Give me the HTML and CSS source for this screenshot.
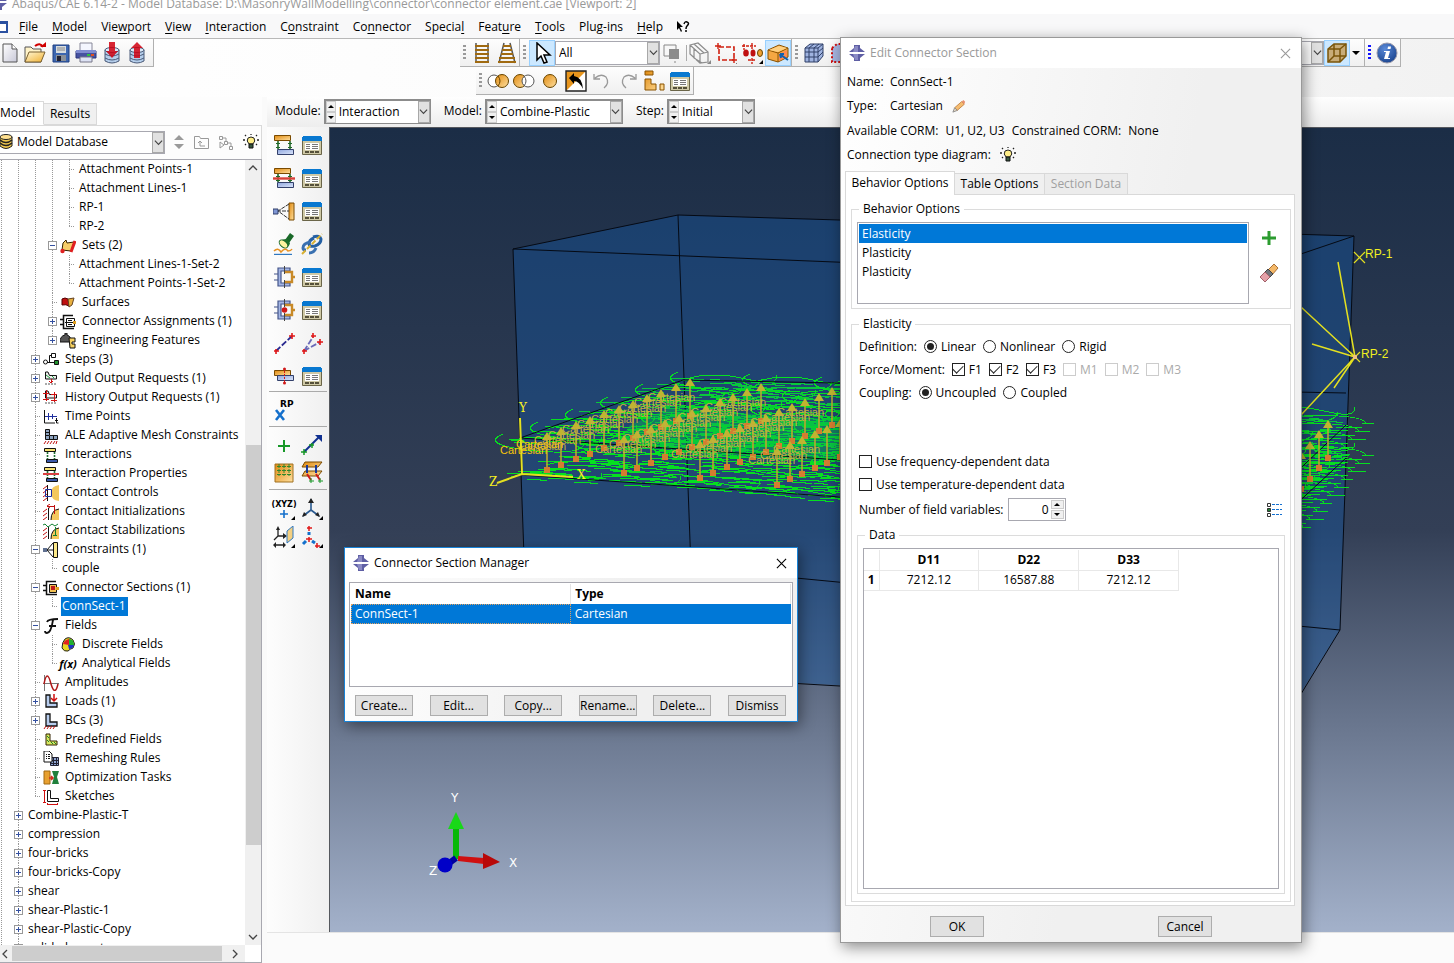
FILE: index.html
```html
<!DOCTYPE html>
<html lang="en">
<head>
<meta charset="utf-8">
<title>Abaqus/CAE 6.14-2</title>
<link rel="stylesheet" href="styles.css">
</head>
<body>
<svg class="defs" aria-hidden="true">
  <defs>
    <linearGradient id="gold" x1="0" y1="0" x2="1" y2="1"><stop offset="0" stop-color="#e08a10"/><stop offset="1" stop-color="#ffe0a0"/></linearGradient>
    <linearGradient id="steel" x1="0" y1="0" x2="1" y2="1"><stop offset="0" stop-color="#8fa6de"/><stop offset="1" stop-color="#dce6fa"/></linearGradient>
    <linearGradient id="folder" x1="0" y1="0" x2="1" y2="1"><stop offset="0" stop-color="#fff8d8"/><stop offset="1" stop-color="#f0b030"/></linearGradient>
    <linearGradient id="paper" x1="0" y1="0" x2="1" y2="1"><stop offset="0" stop-color="#fff"/><stop offset="1" stop-color="#c8c8d8"/></linearGradient>
    <radialGradient id="ball" cx=".4" cy=".3" r=".8"><stop offset="0" stop-color="#5a8ad8"/><stop offset="1" stop-color="#153e88"/></radialGradient>
  </defs>
  <symbol id="logo" viewBox="0 0 16 16"><path d="M5 0h6v3l5 4H0l5-4zM0 9h16l-5 4v3H5v-3z" fill="#5e5ea4"/><path d="M6 1h3v6H4zM4 9h5v6H6z" fill="#8a8ac4"/></symbol>
  <symbol id="new" viewBox="0 0 22 22"><path d="M4 2h9l5 5v13H4z" fill="url(#paper)" stroke="#555" /><path d="M13 2v5h5" fill="#fff" stroke="#555"/></symbol>
  <symbol id="open" viewBox="0 0 22 22"><path d="M1 5h6l2 2h8v13H1z" fill="#fff3c8" stroke="#555"/><path d="M5 10h16l-4 10H1z" fill="url(#folder)" stroke="#7a6030"/><path d="M11 4q5-4 8 1" fill="none" stroke="#d00000" stroke-width="2"/><path d="M16 5h6v-5z" fill="#d00000"/></symbol>
  <symbol id="save" viewBox="0 0 22 22"><path d="M3 3h16v17H3z" fill="#3c66b0" stroke="#1f3f80"/><path d="M6 4h10v7H6z" fill="#d8dde0"/><path d="M7 6h8M7 8h8" stroke="#888"/><path d="M6 13h10v6H6z" fill="#8a9098"/><path d="M7 14h4v5H7z" fill="#223"/></symbol>
  <symbol id="print" viewBox="0 0 22 22"><path d="M5 1h12v8H5z" fill="#f4f6ff" stroke="#889"/><path d="M1 9h20v7H1z" fill="#4652a0" stroke="#2a347c"/><path d="M1 8h20v3H1z" fill="#7f8cd0"/><path d="M5 15h12v5H5z" fill="#dde2f4" stroke="#778"/><path d="M12 12h3v2h-3z" fill="#30c040"/><path d="M16 12h3v2h-3z" fill="#e05020"/></symbol>
  <symbol id="dbase" viewBox="0 0 22 22"><path d="M4 8v11q7 4 14 0V8z" fill="#b4cdea" stroke="#4a5a78"/><path d="M4 12q7 4 14 0M4 16q7 4 14 0" fill="none" stroke="#4a5a78"/><ellipse cx="11" cy="8" rx="7" ry="2.500" fill="#dceaf8" stroke="#4a5a78"/></symbol>
  <symbol id="dbin" viewBox="0 0 22 22"><use href="#dbase"/><path d="M8 0h6v9h3l-6 7-6-7h3z" fill="#d00010" opacity=".85"/></symbol>
  <symbol id="dbout" viewBox="0 0 22 22"><use href="#dbase"/><path d="M8 16h6V6h3l-6-6-6 6h3z" fill="#d00010" opacity=".85"/></symbol>
  <symbol id="ladder" viewBox="0 0 22 22"><path d="M5 1v20M17 1v20" stroke="#555" stroke-width="1.500"/><path d="M4 4h14M4 8h14M4 12h14M4 16h14M4 20h14" stroke="#a06a10" stroke-width="2"/></symbol>
  <symbol id="track" viewBox="0 0 22 22"><path d="M8 1L3 21M14 1l5 20" stroke="#555" stroke-width="1.500"/><path d="M7 4h8M6 8h10M5 12h12M3 16h16M2 20h18" stroke="#a06a10" stroke-width="2"/></symbol>
  <symbol id="arrow" viewBox="0 0 22 22"><path d="M6 1v17l4-4 3 7 3-1-3-7h6z" fill="#fff" stroke="#000" stroke-width="1.500"/></symbol>
  <symbol id="squares" viewBox="0 0 22 22"><path d="M2 3h12v11H2z" fill="#f8f8f8" stroke="#888"/><path d="M7 7h10v10H7z" fill="#8c8c8c"/><path d="M12 20h2" stroke="#888"/></symbol>
  <symbol id="wirebox" viewBox="0 0 22 22"><path d="M1 3l8-2 10 9v10l-8 1L1 12zM1 3l10 9v9M11 12l8-2M5 2l10 9M5 7v9l8 5" fill="none" stroke="#8c8c8c" stroke-width="1.200"/><path d="M22 18v4h-4z" fill="#888"/></symbol>
  <symbol id="redrect" viewBox="0 0 22 22"><path d="M4 5h15v13H4z" fill="none" stroke="#d02010" stroke-width="1.600" stroke-dasharray="5 2"/><path d="M0 4h6M3 1v6M17 18h5M19 16v5" stroke="#d02010" stroke-width="1.400"/><path d="M24 19v4h-4z"/></symbol>
  <symbol id="redpts" viewBox="0 0 22 22"><path d="M1 4h14M11 1v6M3 2v6M11 16v6M7 18h8" fill="none" stroke="#d02010" stroke-width="1.400" stroke-dasharray="3 1"/><ellipse cx="5" cy="11" rx="2.800" ry="3.500" fill="#c01010"/><ellipse cx="12" cy="11" rx="2.500" ry="3.500" fill="#c01010"/><ellipse cx="19" cy="11" rx="2.500" ry="3.500" fill="#f0a030" stroke="#664400"/><path d="M22 18v4h-4z"/></symbol>
  <symbol id="obox" viewBox="0 0 22 22"><path d="M1 8l11-5 9 3v9l-10 5-10-3z" fill="#f5a742" stroke="#8a5200"/><path d="M1 8l10 3v9M11 11l10-5" fill="none" stroke="#8a5200"/><path d="M2 8l10-4 8 2-9 4z" fill="#ffd080"/><path d="M12 12l8-4v7l-8 4z" fill="#ff8a50"/><path d="M21 18l-7-5M13 12l4 0M13 12l1 4" stroke="#1060b0" stroke-width="2"/></symbol>
  <symbol id="mesh" viewBox="0 0 22 22"><path d="M2 6l5-4h13v12l-5 6H2z" fill="#9fb3e0" stroke="#304068"/><path d="M2 6h13v14M15 6l5-4M6 6v14M11 6v14M2 10h13l5-4M2 15h13l5-5M6 6l5-4M11 6l5-4" fill="none" stroke="#304068"/></symbol>
  <symbol id="meshred" viewBox="0 0 22 22"><path d="M3 6l5-4h13v12l-5 6H3z" fill="#a8b8e4" stroke="#d01010" stroke-dasharray="2 2" stroke-width="2"/></symbol>
  <symbol id="cube" viewBox="0 0 22 22"><path d="M2 7l6-5h12v12l-6 6H2z" fill="#c8ac78" stroke="#7a5408" stroke-width="1.500"/><path d="M2 7h12v13M14 7l6-5M8 2v12l-6 6M8 14h12" fill="none" stroke="#7a5408" stroke-width="1.500"/></symbol>
  <symbol id="info" viewBox="0 0 22 22"><circle cx="11" cy="11" r="10" fill="url(#ball)" stroke="#99a"/><path d="M12 4.500h3l-.5 2.500h-3zM8 9h6l-2 7h2v1H8l2-7H8z" fill="#fff"/></symbol>
  <symbol id="union" viewBox="0 0 22 22"><circle cx="7" cy="11" r="6" fill="#fff" stroke="#555"/><circle cx="15" cy="11" r="6.500" fill="url(#gold)" stroke="#664400"/><path d="M11 6q4 5 0 10" fill="none" stroke="#664400"/></symbol>
  <symbol id="minus" viewBox="0 0 22 22"><circle cx="7" cy="11" r="6.500" fill="url(#gold)" stroke="#664400"/><circle cx="15" cy="11" r="6" fill="#fff" stroke="#555"/><path d="M11 6q4 5 0 10" fill="none" stroke="#555"/></symbol>
  <symbol id="disc" viewBox="0 0 22 22"><circle cx="11" cy="11" r="6.500" fill="url(#gold)" stroke="#664400"/></symbol>
  <symbol id="replace" viewBox="0 0 22 22"><path d="M1 1h20v20H1z" fill="#fff"/><path d="M1 1h20L1 21z" fill="#e8951c"/><path d="M1 1h20v20H1z" fill="none" stroke="#222" stroke-width="1.400"/><path d="M4 8l5-5v3q8 1 9 13-4-8-9-8v3z"/></symbol>
  <symbol id="undo" viewBox="0 0 22 22"><path d="M3 4v5h6M4 8q6-5 11-1 4 6-2 11" fill="none" stroke="#999" stroke-width="1.300"/></symbol>
  <symbol id="redo" viewBox="0 0 22 22"><path d="M19 4v5h-6M18 8q-6-5-11-1-4 6 2 11" fill="none" stroke="#999" stroke-width="1.300"/></symbol>
  <symbol id="blocks" viewBox="0 0 22 22"><path d="M2 1h8v4H2zM2 9h6v5h5v6H2zM17 14h4v6h-4z" fill="url(#gold)" stroke="#8a5200"/></symbol>
  <symbol id="mgr" viewBox="0 0 22 22"><path d="M1.500 6.500h19v14h-19z" fill="#cfc9a6" stroke="#6a6548"/><path d="M2 2h18v1h1v4H1V3h1z" fill="#0878d0"/><path d="M4 9h14v7H4z" fill="#fff"/><path d="M5 10.500h4M11 10.500h6M5 12.500h4M11 12.500h6M5 14.500h4M11 14.500h6" stroke="#777"/><path d="M4 17h4v2H4zM9 17h4v2H9zM14 17h4v2h-4z" fill="#55503a"/></symbol>
  <symbol id="bulb" viewBox="0 0 16 16"><path d="M5 4q3-2 6 0 2 3-1 6H6Q3 7 5 4z" fill="#ffee88" stroke="#222"/><path d="M6 10h4v4H6z" fill="#385840" stroke="#111"/><path d="M8 0v1M2 1l1 1M14 1l-1 1M0 6h2M14 6h2M2 11l1-1M14 11l-1-1" stroke="#222" stroke-width="1.300"/></symbol>
  <symbol id="dbgold" viewBox="0 0 16 16"><path d="M2 3v9q6 5 12 0V3z" fill="#f0c850" stroke="#222"/><path d="M2 6q6 5 12 0M2 9q6 5 12 0" fill="none" stroke="#222" stroke-width="1.600"/><ellipse cx="8" cy="3" rx="6" ry="2.500" fill="#ffe090" stroke="#222"/></symbol>
  <symbol id="updn" viewBox="0 0 10 16"><path d="M0 6l5-5 5 5zM0 10l5 5 5-5z" fill="#9a9a9a"/></symbol>
  <symbol id="folderup" viewBox="0 0 16 16"><path d="M1.500 2.500h5l1 2h8v10h-14zM5 9l2-2 2 2M7 7v5h5" fill="none" stroke="#999"/></symbol>
  <symbol id="filter" viewBox="0 0 16 16"><path d="M1.500 2.500h3v3h-3zM6.500 7.500h3v3h-3zM11.500 12.500h3v3h-3zM5 4h3v3M10 9h3v3M2 8v6l4-3z" fill="none" stroke="#999"/></symbol>

  <symbol id="sets" viewBox="0 0 16 16"><path d="M2 12L3 5l3-3 1 3 7-1-3 9z" fill="#f6cd68" stroke="#332200"/><path d="M11 14l4-11" stroke="#e02020" stroke-width="3"/><circle cx="2.500" cy="13" r="2.200" fill="#e02020"/></symbol>
  <symbol id="surf" viewBox="0 0 16 16"><path d="M2 4q3-2 6 0l1 7q-3-2-7-1z" fill="#c01010" stroke="#500"/><path d="M8 4l6-1-2 7-3 2z" fill="#e8b040" stroke="#642"/></symbol>
  <symbol id="cassign" viewBox="0 0 16 16"><path d="M13 1.500H3.500v13H14M0 5.500h3M0 10.500h3" fill="none" stroke="#111" stroke-width="1.500"/><path d="M14.500 4.500h-8v8h8z" fill="#fff" stroke="#111"/><path d="M5 8.500h8M8 6.500h4M8 10.500h4" stroke="#111"/><path d="M13 8.500h3" stroke="#e0a020" stroke-width="3"/></symbol>
  <symbol id="csect" viewBox="0 0 16 16"><path d="M13 1.500H3.500v13H14M0 5.500h3M0 10.500h3" fill="none" stroke="#111" stroke-width="1.500"/><path d="M6.500 4.500h7v8h-7z" fill="#f0c050" stroke="#111"/><path d="M8 6h4v4H8z" fill="#c01818"/><path d="M13 8.500h3" stroke="#e0a020" stroke-width="3"/></symbol>
  <symbol id="eng" viewBox="0 0 16 16"><path d="M0 9q0-6 5-7V0h2v2q4 1 4 7z" fill="#555" stroke="#111"/><path d="M9 5h6v4h-3v2h3v4h-5z" fill="#f6d060" stroke="#111"/></symbol>
  <symbol id="steps" viewBox="0 0 16 16"><path d="M8.500 1.500h4v4h-4z" fill="#fff" stroke="#111"/><circle cx="2.500" cy="10" r="2" fill="#fff" stroke="#111"/><path d="M4 10.500h7M6.500 10V3.500h2" stroke="#111" fill="none"/><path d="M11.500 8.500h4v4h-4z" fill="#20902c" stroke="#111"/></symbol>
  <symbol id="fout" viewBox="0 0 16 16"><path d="M2.500 1v7h11V4.500h-7L5 1z" fill="#eee" stroke="#111"/><path d="M3 4l4 3M9 5l2 2" stroke="#20a040"/><path d="M8.500 8v4M6 10l2 2 2-2" fill="none" stroke="#d01010"/><path d="M3 12v3M6 12v3M9 12v3M12 12v3" stroke="#555" stroke-dasharray="2 1"/></symbol>
  <symbol id="hout" viewBox="0 0 16 16"><path d="M2.500 1v7h11V4.500h-7L5 1z" fill="#eee" stroke="#111"/><path d="M0 3.500h6M3.500 0v11M0 9.500h6M11.500 2v10M8 4.500h6M8 10.500h6" fill="none" stroke="#d01010"/><path d="M3 12v3M6 12v3M9 12v3M12 12v3" stroke="#555" stroke-dasharray="2 1"/></symbol>
  <symbol id="tpts" viewBox="0 0 16 16"><path d="M1.500 1v13H12" fill="none" stroke="#111"/><path d="M2 7.500h12M5.500 4v7M9.500 5v5" stroke="#2030a0"/><path d="M13.500 9v5h2M12 11.500h3" stroke="#111" fill="none"/></symbol>
  <symbol id="ale" viewBox="0 0 16 16"><path d="M2.500 1.500h4v6h8v4h-12z" fill="#8ea4c0" stroke="#111"/><path d="M2 4.500h4M6.500 8v4M10.500 8v4M2 7.500h4" stroke="#111"/><path d="M1 16l2-3M4 16l2-3M7 16l2-3M10 16l2-3M13 16l1-3" stroke="#c01010"/></symbol>
  <symbol id="inter" viewBox="0 0 16 16"><path d="M1.500 1.500h11v3h-11z" fill="#f6e070" stroke="#111"/><path d="M3.500 12.500h11v3h-11z" fill="#3a58a8" stroke="#111"/><path d="M4.500 5v7M11.500 5v7" stroke="#207030" stroke-dasharray="2 1" stroke-width="1.600"/></symbol>
  <symbol id="iprop" viewBox="0 0 16 16"><use href="#inter"/><path d="M0 8h16" stroke="#d84040" stroke-width="2"/></symbol>
  <symbol id="cc" viewBox="0 0 16 16"><path d="M16 0q-8 1-8 8t8 8z" fill="#f4c85c" /><path d="M0 4l4-3M0 8l4-3M0 12l4-3M0 16l4-3" stroke="#c01010"/><path d="M4.500 0v16" stroke="#111"/><path d="M2.500 4.500h6v7h-6z" fill="none" stroke="#2030a0"/></symbol>
  <symbol id="ci" viewBox="0 0 16 16"><path d="M16 5q-8 1-8 11h8z" fill="#f4c85c"/><path d="M16 5q-8 1-8 11M5.500 4v12" fill="none" stroke="#111"/><path d="M0 8l4-3M0 12l4-3M0 16l4-3M4 2.500h8M7 0L4 2l3 2M11.500 1v9" fill="none" stroke="#c01010"/></symbol>
  <symbol id="cs" viewBox="0 0 16 16"><path d="M16 5q-8 1-8 11h8z" fill="#f4c85c"/><path d="M16 5q-8 1-8 11M5.500 4v12" fill="none" stroke="#111"/><path d="M0 8l4-3M0 12l4-3M0 16l4-3" stroke="#c01010"/><path d="M0 2l2-1 3 3 4-3 3 2 3-2M12.500 4v9M10 12.500h4" fill="none" stroke="#108030"/></symbol>
  <symbol id="constr" viewBox="0 0 16 16"><path d="M10.500 .5h4v15h-4z" fill="#fce888" stroke="#111"/><path d="M10 1L4 8l6 7M2 8h8" fill="none" stroke="#111"/><path d="M0 6h4v4H0z" fill="#607090"/></symbol>
  <symbol id="dfield" viewBox="0 0 16 16"><path d="M5 2q4-3 8 1 3 4 0 8-3 1-5 3-4 1-6-3 0-6 3-9z" fill="#e8d820" stroke="#222"/><path d="M3 7q1-4 6-5v6z" fill="#e02020"/><path d="M9 2q5 0 5 6H9z" fill="#20b030"/><path d="M8 8h6q-1 4-5 4z" fill="#2030c8"/></symbol>
  <symbol id="amp" viewBox="0 0 16 16"><path d="M1.500 0v16M0 8.500h16" stroke="#777" fill="none"/><path d="M1 9Q4-7 8 9q4 13 7 0" fill="none" stroke="#b01818" stroke-width="1.500"/></symbol>
  <symbol id="ell" viewBox="0 0 16 16"><path d="M3 1h4v8h7v4H3z" fill="#b8cdee" stroke="#111" stroke-width="1.300"/></symbol>
  <symbol id="loads" viewBox="0 0 16 16"><use href="#ell"/><path d="M11 0v7M8 4l3 3 3-3" fill="none" stroke="#d01010" stroke-width="1.500"/></symbol>
  <symbol id="bcs" viewBox="0 0 16 16"><use href="#ell"/><path d="M1 16l2-3M4 16l2-3M7 16l2-3M10 16l2-3" stroke="#c01010"/></symbol>
  <symbol id="pre" viewBox="0 0 16 16"><path d="M3 2h4v7h7v4H3z" fill="#d8e860" stroke="#332200"/><path d="M4 4l2 2M4 8l2 2M8 10l2 2M11 10l2 2" stroke="#208030"/></symbol>
  <symbol id="remesh" viewBox="0 0 16 16"><path d="M7.500 6.500h8v8h-8z" fill="#8ea4d0" stroke="#223"/><path d="M10.500 6v9M13.500 6v9M7 9.500h9M7 12.500h9" stroke="#223"/><path d="M1 0h5l3 3v8H1z" fill="#fff" stroke="#111"/><path d="M3 3.500h1M5 3.500h2M3 5.500h1M5 5.500h2M3 7.500h1M5 7.500h2" stroke="#111"/></symbol>
  <symbol id="opt" viewBox="0 0 16 16"><path d="M1 1h6v13H1z" fill="#e8a030" stroke="#a06810"/><path d="M9 1h7l-2 6 2 7H9l2-7z" fill="#20803c"/><path d="M6 8h4M8 6l2 2-2 2" stroke="#d03020" stroke-width="1.600" fill="none"/></symbol>
  <symbol id="sketch" viewBox="0 0 16 16"><path d="M4.500 1.500h3v8h8v3h-11z" fill="#fff" stroke="#111"/><path d="M1.500 1v12M0 1.500h3M0 13.500h3M4 15.500h11M4.500 14v2M14.500 14v2" stroke="#d01010"/></symbol>

  <symbol id="b-int" viewBox="0 0 22 22"><path d="M1.500 1.500h16v5h-16z" fill="url(#gold)" stroke="#7a4a00"/><path d="M4.500 15.500h16v5h-16z" fill="url(#steel)" stroke="#33406a"/><path d="M5 7v8M17 7v8" stroke="#206828" stroke-width="1.600"/><path d="M3 9.500h4M3 13.500h4M15 9.500h4M15 13.500h4" stroke="#206828"/></symbol>
  <symbol id="b-prop" viewBox="0 0 22 22"><use href="#b-int"/><path d="M0 11.500h22" stroke="#d84038" stroke-width="2.400"/></symbol>
  <symbol id="b-con" viewBox="0 0 22 22"><path d="M16 3h5v17h-5z" fill="url(#gold)" stroke="#7a4a00"/><path d="M16 4L5 11l11 8M4 11h12" fill="none" stroke="#333" stroke-dasharray="4 1"/><path d="M0 9h5v5H0z" fill="#7f96d4" stroke="#33406a"/></symbol>
  <symbol id="b-torch" viewBox="0 0 22 22"><path d="M12 7l5-7 4 3-5 7z" fill="#186828"/><path d="M7 8q3-2 6-2l4 4q-1 4-3 4z" fill="#20702c"/><ellipse cx="10.500" cy="11" rx="5" ry="3" transform="rotate(40 10.500 11)" fill="#fff3a0" stroke="#186828"/><path d="M1 18q4-4 7 1 4-5 7-1 3 0 4-2" fill="none" stroke="#e89020" stroke-width="1.500"/><path d="M1 21.500h18" stroke="#3078c0" stroke-width="1.400"/></symbol>
  <symbol id="b-link" viewBox="0 0 22 22"><path d="M12 4q7-2 8 2 0 5-6 7-6 1-6-2 0-4 5-6" fill="none" stroke="#2460a4" stroke-width="3"/><path d="M10 9q-8 1-8 6 0 2 3 2M8 20q5 0 7-5" fill="none" stroke="#3a70b0" stroke-width="3"/><path d="M1 21L21 1" stroke="#d8b030" stroke-width="2" stroke-dasharray="5 2"/></symbol>
  <symbol id="b-cs" viewBox="0 0 22 22"><path d="M17 2H5v18h12v-3H8V5h9zM1 8h4M1 14h4" fill="#a4b6e4" stroke="#44558a" stroke-width="1.200"/><path d="M12 6h7v10h-7M19 11h3" fill="none" stroke="#c88a28" stroke-width="2.400"/><path d="M11.500 0v8M11.500 14v8" stroke="#444"/></symbol>
  <symbol id="b-ca" viewBox="0 0 22 22"><use href="#b-cs"/><circle cx="11.500" cy="11" r="2.800" fill="#d01818"/></symbol>
  <symbol id="b-w1" viewBox="0 0 22 22"><path d="M3 19L19 4" stroke="#2a2a90" stroke-width="1.800" stroke-dasharray="6 2"/><path d="M1 19h5M3 17v5M16 4h6M19 1v6" stroke="#e01818" stroke-width="1.600"/></symbol>
  <symbol id="b-w2" viewBox="0 0 22 22"><path d="M3 19l9-14M3 19l16-9" stroke="#6a6ab8" stroke-width="1.800" stroke-dasharray="6 2"/><path d="M1 19h5M3 17v5M10 4h5M12 1v5M16 10h6M19 7v6" stroke="#e01818" stroke-width="1.600"/></symbol>
  <symbol id="b-fast" viewBox="0 0 22 22"><path d="M1.500 5.500h16v5h-16z" fill="url(#gold)" stroke="#7a4a00"/><path d="M4.500 10.500h16v5h-16z" fill="url(#steel)" stroke="#33406a"/><path d="M11.500 3v16" stroke="#d01818" stroke-dasharray="2 1"/><circle cx="11.500" cy="4" r="1.500" fill="#d01818"/><circle cx="11.500" cy="18" r="1.500" fill="#d01818"/></symbol>
  <symbol id="plus" viewBox="0 0 22 22"><path d="M11 7v12M5 13h12" stroke="#189828" stroke-width="2"/></symbol>
  <symbol id="b-axis" viewBox="0 0 22 22"><path d="M3 19L19 3" stroke="#103090" stroke-width="2"/><path d="M14 2h7v7z" fill="#103090"/><path d="M0 19h6M3 16v6M8 12h5M11 10v5" stroke="#189828" stroke-width="1.500"/></symbol>
  <symbol id="b-part" viewBox="0 0 22 22"><path d="M2 3h18v18H2z" fill="url(#gold)" stroke="#a07020"/><path d="M4 5.500h4M9 5.500h4M14 5.500h4M4 9.500h4M9 9.500h4M14 9.500h4M4 13.500h4M9 13.500h4M14 13.500h4M6 3v12M11 3v12M16 3v12" stroke="#30882c" stroke-dasharray="4 1"/></symbol>
  <symbol id="b-layer" viewBox="0 0 22 22"><path d="M4 1h17l-4 5H1zM4 10h17l-4 5H1z" fill="url(#gold)" stroke="#7a4a00"/><path d="M6 4v8M15 4v8" stroke="#183898" stroke-width="2"/><path d="M6 13l4 6M15 13l4 6" stroke="#d01818" stroke-width="2"/><path d="M8 20h5M17 20h5M10 17v5M19 17v5" stroke="#189828"/></symbol>
  <symbol id="b-datum" viewBox="0 0 22 22"><path d="M11 12v8M7 16h8" stroke="#1470cc" stroke-width="1.600"/><path d="M22 18v4h-4z"/></symbol>
  <symbol id="b-csys" viewBox="0 0 22 22"><path d="M10 1v12M10 12l-8 6M10 12l8 6" stroke="#2a5a90" stroke-width="1.600"/><path d="M10 0l3 5H7zM1 19l2-5 3 3zM19 19l-5-2 3-3z" fill="#222"/><path d="M22 18v4h-4z"/></symbol>
  <symbol id="b-plane" viewBox="0 0 22 22"><path d="M5 2v8h7M5 10l-4 4M1 19h11" stroke="#222" fill="none" stroke-width="1.300"/><path d="M3 4l2-4 2 4zM10 7l4 3-4 3zM3 16l-3 3 3 3zM10 16l3 3-3 3z" fill="#222"/><path d="M14 5l6-5v12l-6 5z" fill="#f4cf80" stroke="#3078c0"/><path d="M22 18v4h-4z"/></symbol>
  <symbol id="b-pts" viewBox="0 0 22 22"><path d="M8 0v5M6 2h5M8 11v5M5 13h6M14 20h5M16 17v5" stroke="#e01818" stroke-width="1.500"/><path d="M8 6v3M5 15l-3 3M11 15l3 2" stroke="#1470cc" stroke-width="3"/><path d="M22 18v4h-4z"/></symbol>
  <symbol id="x" viewBox="0 0 12 12"><path d="M1 1l10 10M11 1L1 11" stroke="currentColor" stroke-width="1.200"/></symbol>
  <symbol id="pencil" viewBox="0 0 16 16"><path d="M3 10l8-7 3 3-8 7z" fill="#f5bc70" stroke="#c08040"/><path d="M1 15l2-5 3 3z" fill="#e8d8c0" stroke="#888"/><path d="M11 3l2-2 2 2-1 3z" fill="#e89070"/></symbol>
  <symbol id="fatplus" viewBox="0 0 16 16"><path d="M6.500 1h3v5.500H15v3H9.500V15h-3V9.500H1v-3h5.500z" fill="#2c9c30"/></symbol>
  <symbol id="eraser" viewBox="0 0 20 20"><path d="M9 7l6-6 4 4-6 7z" fill="#f4b868" stroke="#a87038"/><path d="M6 9l3-3 5 5-3 3z" fill="#70757c" stroke="#444"/><path d="M1 14l5-5 5 5-5 5z" fill="#e4a0a8" stroke="#a06068"/></symbol>
  <symbol id="list" viewBox="0 0 16 16"><path d="M1.500 1.500h3v3h-3zM1.500 11.500h3v3h-3z" fill="#fff" stroke="#333"/><path d="M1.500 6.500h3v3h-3z" fill="#208030" stroke="#333"/><path d="M6 2.500h10M6 7.500h10M6 12.500h10" stroke="#1470d0" stroke-dasharray="3 1"/></symbol>
  <symbol id="chev" viewBox="0 0 10 10"><path d="M1 3l4 4 4-4" fill="none" stroke="#444" stroke-width="1.300"/></symbol>
  <symbol id="f" viewBox="0 0 16 16"><path d="M4 4q1-3 11-3M10 2Q8 15 4 15q-2 0-2-2M6 8h7" fill="none" stroke="#111" stroke-width="1.800"/></symbol>
</svg>

<header class="titlebar"><svg class="i16"><use href="#logo"/></svg><span>Abaqus/CAE 6.14-2 - Model Database: D:\MasonryWallModelling\connector\connector element.cae [Viewport: 2]</span></header>
<nav class="menubar">
  <span class="mdi"></span>
  <button><u>F</u>ile</button><button><u>M</u>odel</button><button>Vie<u>w</u>port</button><button><u>V</u>iew</button><button><u>I</u>nteraction</button><button>C<u>o</u>nstraint</button><button>Co<u>n</u>nector</button><button>Specia<u>l</u></button><button>Feat<u>u</u>re</button><button><u>T</u>ools</button><button>Plu<u>g</u>-ins</button><button><u>H</u>elp</button>
  <button class="whats" aria-label="What's this?"><svg width="14" height="14" viewBox="0 0 14 14"><path d="M1 1v9l2-2 2 4 1-1-2-4h3z"/><path d="M8 4q1-3 3-2 3 1 0 4-1 1-1 3M10 10v2" fill="none" stroke="#000" stroke-width="1.500"/></svg></button>
</nav>

<section class="toolbars">
  <div class="bar-row">
    <div class="bar file">
      <button aria-label="New"><svg><use href="#new"/></svg></button><button aria-label="Open"><svg><use href="#open"/></svg></button><button aria-label="Save"><svg><use href="#save"/></svg></button><button aria-label="Print"><svg><use href="#print"/></svg></button><button aria-label="Import"><svg><use href="#dbin"/></svg></button><button aria-label="Export"><svg><use href="#dbout"/></svg></button>
    </div>
    <div class="bar narrow"><i class="grip"></i><button aria-label="Ladder"><svg><use href="#ladder"/></svg></button><button aria-label="Track"><svg><use href="#track"/></svg></button></div>
    <div class="bar pick"><i class="grip"></i><button class="on" aria-label="Select"><svg><use href="#arrow"/></svg></button>
      <span class="combo all"><select aria-label="Selection filter"><option>All</option></select><span class="drop"><svg><use href="#chev"/></svg></span></span>
      <button aria-label="Highlight"><svg><use href="#squares"/></svg></button><i class="vsep"></i><button aria-label="Box"><svg><use href="#wirebox"/></svg></button><button aria-label="Drag shape"><svg><use href="#redrect"/></svg></button><button aria-label="Enclosed"><svg><use href="#redpts"/></svg></button><button class="on" aria-label="Faces"><svg><use href="#obox"/></svg></button></div>
    <div class="bar views"><i class="grip"></i><button aria-label="Mesh"><svg><use href="#mesh"/></svg></button><button aria-label="Seed"><svg><use href="#meshred"/></svg></button>
      <span class="combo render"><select aria-label="Render style"><option></option></select><span class="drop"><svg><use href="#chev"/></svg></span></span>
      <button class="on" aria-label="Shaded"><svg><use href="#cube"/></svg></button><i class="tri"></i></div>
    <div class="bar"><i class="grip blue"></i><button aria-label="Information"><svg><use href="#info"/></svg></button></div>
  </div>
  <div class="bar-row second">
    <div class="bar"><i class="grip"></i><button aria-label="Merge"><svg><use href="#union"/></svg></button><button aria-label="Cut"><svg><use href="#minus"/></svg></button><button aria-label="Only"><svg><use href="#disc"/></svg></button><button aria-label="Replace"><svg><use href="#replace"/></svg></button><button aria-label="Undo"><svg><use href="#undo"/></svg></button><button aria-label="Redo"><svg><use href="#redo"/></svg></button><button aria-label="Blocks"><svg><use href="#blocks"/></svg></button><button aria-label="Manager"><svg><use href="#mgr"/></svg></button></div>
  </div>
</section>

<main class="main">
  <aside class="side">
    <div class="side-tabs" role="tablist"><button class="tab active" role="tab">Model</button><button class="tab" role="tab">Results</button></div>
    <div class="picker">
      <span class="combo db"><svg class="i16"><use href="#dbgold"/></svg><select aria-label="Tree source"><option>Model Database</option></select><span class="drop"><svg><use href="#chev"/></svg></span></span>
      <svg class="ud"><use href="#updn"/></svg><svg class="i16"><use href="#folderup"/></svg><svg class="i16"><use href="#filter"/></svg><svg class="i16"><use href="#bulb"/></svg>
    </div>
    <div class="tree-wrap">
      <div class="tree">
        <ul><li class="cut"><ul>
          <li class="cut"><ul>
            <li class="cut"><ul>
              <li class="cut"><ul>
                <li><a href="#">Attachment Points-1</a></li>
                <li><a href="#">Attachment Lines-1</a></li>
                <li><a href="#">RP-1</a></li>
                <li><a href="#">RP-2</a></li>
              </ul></li>
              <li><div class="row"><button class="ex minus" aria-label="Collapse"></button><svg class="i16"><use href="#sets"/></svg><a href="#">Sets (2)</a></div>
                <ul><li><a href="#">Attachment Lines-1-Set-2</a></li><li><a href="#">Attachment Points-1-Set-2</a></li></ul></li>
              <li><div class="row"><svg class="i16"><use href="#surf"/></svg><a href="#">Surfaces</a></div></li>
              <li><div class="row"><button class="ex" aria-label="Expand"></button><svg class="i16"><use href="#cassign"/></svg><a href="#">Connector Assignments (1)</a></div></li>
              <li><div class="row"><button class="ex" aria-label="Expand"></button><svg class="i16"><use href="#eng"/></svg><a href="#">Engineering Features</a></div></li>
            </ul></li>
            <li><div class="row"><button class="ex" aria-label="Expand"></button><svg class="i16"><use href="#steps"/></svg><a href="#">Steps (3)</a></div></li>
            <li><div class="row"><button class="ex" aria-label="Expand"></button><svg class="i16"><use href="#fout"/></svg><a href="#">Field Output Requests (1)</a></div></li>
            <li><div class="row"><button class="ex" aria-label="Expand"></button><svg class="i16"><use href="#hout"/></svg><a href="#">History Output Requests (1)</a></div></li>
            <li><div class="row"><svg class="i16"><use href="#tpts"/></svg><a href="#">Time Points</a></div></li>
            <li><div class="row"><svg class="i16"><use href="#ale"/></svg><a href="#">ALE Adaptive Mesh Constraints</a></div></li>
            <li><div class="row"><svg class="i16"><use href="#inter"/></svg><a href="#">Interactions</a></div></li>
            <li><div class="row"><svg class="i16"><use href="#iprop"/></svg><a href="#">Interaction Properties</a></div></li>
            <li><div class="row"><svg class="i16"><use href="#cc"/></svg><a href="#">Contact Controls</a></div></li>
            <li><div class="row"><svg class="i16"><use href="#ci"/></svg><a href="#">Contact Initializations</a></div></li>
            <li><div class="row"><svg class="i16"><use href="#cs"/></svg><a href="#">Contact Stabilizations</a></div></li>
            <li><div class="row"><button class="ex minus" aria-label="Collapse"></button><svg class="i16"><use href="#constr"/></svg><a href="#">Constraints (1)</a></div>
              <ul><li><a href="#">couple</a></li></ul></li>
            <li><div class="row"><button class="ex minus" aria-label="Collapse"></button><svg class="i16"><use href="#csect"/></svg><a href="#">Connector Sections (1)</a></div>
              <ul><li><a href="#" class="sel">ConnSect-1</a></li></ul></li>
            <li><div class="row"><button class="ex minus" aria-label="Collapse"></button><svg class="i16"><use href="#f"/></svg><a href="#">Fields</a></div>
              <ul><li><div class="row"><svg class="i16"><use href="#dfield"/></svg><a href="#">Discrete Fields</a></div></li><li><div class="row"><span class="fx">f(x)</span><a href="#">Analytical Fields</a></div></li></ul></li>
            <li><div class="row"><svg class="i16"><use href="#amp"/></svg><a href="#">Amplitudes</a></div></li>
            <li><div class="row"><button class="ex" aria-label="Expand"></button><svg class="i16"><use href="#loads"/></svg><a href="#">Loads (1)</a></div></li>
            <li><div class="row"><button class="ex" aria-label="Expand"></button><svg class="i16"><use href="#bcs"/></svg><a href="#">BCs (3)</a></div></li>
            <li><div class="row"><svg class="i16"><use href="#pre"/></svg><a href="#">Predefined Fields</a></div></li>
            <li><div class="row"><svg class="i16"><use href="#remesh"/></svg><a href="#">Remeshing Rules</a></div></li>
            <li><div class="row"><svg class="i16"><use href="#opt"/></svg><a href="#">Optimization Tasks</a></div></li>
            <li><div class="row"><svg class="i16"><use href="#sketch"/></svg><a href="#">Sketches</a></div></li>
          </ul></li>
          <li><div class="row"><button class="ex" aria-label="Expand"></button><a href="#">Combine-Plastic-T</a></div></li>
          <li><div class="row"><button class="ex" aria-label="Expand"></button><a href="#">compression</a></div></li>
          <li><div class="row"><button class="ex" aria-label="Expand"></button><a href="#">four-bricks</a></div></li>
          <li><div class="row"><button class="ex" aria-label="Expand"></button><a href="#">four-bricks-Copy</a></div></li>
          <li><div class="row"><button class="ex" aria-label="Expand"></button><a href="#">shear</a></div></li>
          <li><div class="row"><button class="ex" aria-label="Expand"></button><a href="#">shear-Plastic-1</a></div></li>
          <li><div class="row"><button class="ex" aria-label="Expand"></button><a href="#">shear-Plastic-Copy</a></div></li>
          <li><div class="row"><button class="ex" aria-label="Expand"></button><a href="#">solid-element</a></div></li>
          <li></li>
        </ul></li><li></li></ul>
      </div>
      <div class="vscroll"><svg class="up"><use href="#chev"/></svg><i></i><svg><use href="#chev"/></svg></div>
      <div class="hscroll"><svg class="lt"><use href="#chev"/></svg><i></i><svg class="rt"><use href="#chev"/></svg></div>
      <div class="corner"></div>
    </div>
  </aside>

  <section class="work">
    <div class="context">
      <label for="module">Module:</label>
      <span class="combo ctx w107"><span class="spin"><b></b><b></b></span><select id="module"><option>Interaction</option></select><span class="drop"><svg><use href="#chev"/></svg></span></span>
      <label for="model">Model:</label>
      <span class="combo ctx w138"><span class="spin"><b></b><b></b></span><select id="model"><option>Combine-Plastic</option></select><span class="drop"><svg><use href="#chev"/></svg></span></span>
      <label for="step">Step:</label>
      <span class="combo ctx w88"><span class="spin"><b></b><b></b></span><select id="step"><option>Initial</option></select><span class="drop"><svg><use href="#chev"/></svg></span></span>
    </div>
    <div class="canvas-row">
      <div class="toolbox">
        <div class="tools big">
          <svg><use href="#b-int"/></svg><svg><use href="#mgr"/></svg>
          <svg><use href="#b-prop"/></svg><svg><use href="#mgr"/></svg>
          <svg><use href="#b-con"/></svg><svg><use href="#mgr"/></svg>
          <svg><use href="#b-torch"/></svg><svg><use href="#b-link"/></svg>
          <svg><use href="#b-cs"/></svg><svg><use href="#mgr"/></svg>
          <svg><use href="#b-ca"/></svg><svg><use href="#mgr"/></svg>
          <svg><use href="#b-w1"/></svg><svg><use href="#b-w2"/></svg>
          <svg><use href="#b-fast"/></svg><svg><use href="#mgr"/></svg>
        </div>
        <div class="tools rp"><svg viewBox="0 0 26 24"><path d="M4 13l8 10M12 13L4 23" stroke="#1470cc" stroke-width="2.600"/><text x="8" y="10" class="tiny">RP</text></svg></div>
        <div class="tools">
          <svg><use href="#plus"/></svg><svg><use href="#b-axis"/></svg>
          <svg><use href="#b-part"/></svg><svg><use href="#b-layer"/></svg>
        </div>
        <div class="tools">
          <svg viewBox="0 0 22 22"><use href="#b-datum"/><text x="11" y="9" text-anchor="middle" class="mini">(XYZ)</text></svg><svg><use href="#b-csys"/></svg>
          <svg><use href="#b-plane"/></svg><svg><use href="#b-pts"/></svg>
        </div>
      </div>
      <div class="viewport">
        <svg id="scene" viewBox="330 128 1124 804" preserveAspectRatio="xMinYMin slice">
          <path d="M513 249L678 215L1354 236L1340 630L1290 710L528 668z" class="solid"/>
          <path d="M513 249L678 215L1354 236L1230 278zM513 249L528 668L1290 712L1340 630L1354 236M678 215L691 568L1340 630M528 668L691 568" class="edge"/>
          <g id="mesh3d"></g>
          <path d="M522 475L840 497L1225 540M1346 425L1225 540M520 438L683 380L1346 393M520 438L840 460L1225 505M1346 458L1225 570" class="edge"/>
          <g id="rods"></g>
          <g id="names"></g>
          <g class="ann">
            <path d="M520 418L522 474L573 477M522 474L497 483" stroke-width="2"/>
            <path d="M1355 357L1338 262M1355 357L1301 307M1355 357L1312 344M1355 357L1334 388M1355 357L1301 415" stroke-width="1.500"/>
            <path d="M1354 252l11 11M1365 252l-11 11M1350 352l10 10M1360 352l-10 10" stroke-width="1.200"/>
          </g>
          <path d="M1353 355h4v4h-4z" fill="#f0c080"/>
          <g class="lab"><text x="1365" y="258">RP-1</text><text x="1361" y="358">RP-2</text></g>
          <g class="labm"><text x="519" y="412">Y</text><text x="577" y="479">X</text><text x="489" y="486">Z</text></g>
          <path d="M453 829h6v30h-6z" fill="#08b808"/><path d="M456 812l8 17h-16z" fill="#18d818"/>
          <path d="M458 856l26 2v6l-26-3z" fill="#d01010"/><path d="M483 853l17 9-17 7z" fill="#b80808"/>
          <path d="M456 858l-8 6" stroke="#0000a0" stroke-width="6"/><circle cx="445" cy="865" r="7.500" fill="#0000c8"/>
          <g class="triad"><text x="451" y="802">Y</text><text x="509" y="867">X</text><text x="429" y="875">Z</text></g>
        </svg>
      </div>
    </div>
    <footer class="prompt"></footer>
  </section>
</main>

<section class="dialog manager" role="dialog" aria-label="Connector Section Manager">
  <header><svg class="i16"><use href="#logo"/></svg><h2>Connector Section Manager</h2><button class="close" aria-label="Close"><svg><use href="#x"/></svg></button></header>
  <div class="list-box">
    <table><thead><tr><th>Name</th><th>Type</th></tr></thead><tbody><tr><td class="focus">ConnSect-1</td><td>Cartesian</td></tr></tbody></table>
  </div>
  <footer><button class="btn">Create...</button><button class="btn">Edit...</button><button class="btn">Copy...</button><button class="btn">Rename...</button><button class="btn">Delete...</button><button class="btn">Dismiss</button></footer>
</section>

<section class="dialog editor" role="dialog" aria-label="Edit Connector Section">
  <header><svg class="i16"><use href="#logo"/></svg><h2>Edit Connector Section</h2><button class="close" aria-label="Close"><svg><use href="#x"/></svg></button></header>
  <div class="facts">
    <p><span class="k">Name:</span><span>ConnSect-1</span></p>
    <p><span class="k">Type:</span><span>Cartesian</span><svg class="i14"><use href="#pencil"/></svg></p>
    <p class="corm"><span>Available CORM:</span><span>U1, U2, U3</span><span>Constrained CORM:</span><span>None</span></p>
    <p><span>Connection type diagram:</span><svg class="i16"><use href="#bulb"/></svg></p>
  </div>
  <div class="etabs" role="tablist"><button class="tab active" role="tab">Behavior Options</button><button class="tab t2" role="tab">Table Options</button><button class="tab t3" role="tab" disabled>Section Data</button></div>
  <div class="epanel">
    <fieldset class="behav"><legend>Behavior Options</legend>
      <ul class="opts"><li class="sel">Elasticity</li><li>Plasticity</li><li>Plasticity</li></ul>
      <div class="acts"><button aria-label="Add"><svg class="i16"><use href="#fatplus"/></svg></button><button aria-label="Delete"><svg class="i20"><use href="#eraser"/></svg></button></div>
    </fieldset>
    <fieldset class="elas"><legend>Elasticity</legend>
      <div class="line"><span>Definition:</span><label><input type="radio" name="def" checked>Linear</label><label><input type="radio" name="def">Nonlinear</label><label><input type="radio" name="def">Rigid</label></div>
      <div class="line"><span>Force/Moment:</span><label><input type="checkbox" checked>F1</label><label><input type="checkbox" checked>F2</label><label><input type="checkbox" checked>F3</label><label class="off"><input type="checkbox" disabled>M1</label><label class="off"><input type="checkbox" disabled>M2</label><label class="off"><input type="checkbox" disabled>M3</label></div>
      <div class="line"><span>Coupling:</span><label><input type="radio" name="cpl" checked>Uncoupled</label><label><input type="radio" name="cpl">Coupled</label></div>
      <div class="line gap"><label><input type="checkbox">Use frequency-dependent data</label></div>
      <div class="line"><label><input type="checkbox">Use temperature-dependent data</label></div>
      <div class="line num"><label for="nfv">Number of field variables:</label><span class="number"><input id="nfv" type="text" value="0"><span class="spin"><b></b><b></b></span></span><svg class="i16"><use href="#list"/></svg></div>
      <fieldset class="data"><legend>Data</legend>
        <div class="grid-box"><table><thead><tr><th></th><th>D11</th><th>D22</th><th>D33</th></tr></thead><tbody><tr><th>1</th><td>7212.12</td><td>16587.88</td><td>7212.12</td></tr></tbody></table></div>
      </fieldset>
    </fieldset>
  </div>
  <footer><button class="btn">OK</button><button class="btn">Cancel</button></footer>
</section>
<script src="scene.js"></script>
</body>
</html>
```
FILE: styles.css
```css
* { box-sizing: border-box; }
body { margin: 0; height: 100vh; overflow: hidden; display: flex; flex-direction: column; position: relative; background: #fafafa; color: #000; font: 12px/16px "Open Sans", "Noto Sans", sans-serif; }
button, select, input { font: inherit; color: inherit; margin: 0; padding: 0; border: 0; background: none; border-radius: 0; }
svg { display: block; flex: none; overflow: visible; }
ul, p, h2 { margin: 0; padding: 0; list-style: none; font: inherit; }
a { color: inherit; text-decoration: none; }
.defs { position: absolute; width: 0; height: 0; }
.i14 { width: 14px; height: 14px; }
.i16 { width: 16px; height: 16px; }
.i20 { width: 20px; height: 20px; }

.titlebar { height: 14px; flex: none; display: flex; align-items: flex-end; overflow: hidden; background: #fff; color: #999; gap: 5px; line-height: 20px; white-space: nowrap; }
.titlebar svg { margin-left: -9px; margin-bottom: 4px; }
.menubar { height: 24px; flex: none; display: flex; align-items: center; background: #f8f8f9; white-space: nowrap; padding-top: 2px; }
.menubar button { padding: 0 7px; }
.menubar u { text-underline-offset: 2px; }
.menubar .whats { padding: 0 6px; }
.mdi { width: 8px; height: 12px; background: #fff; border: 2px solid #2a50a0; border-left: 0; border-top-width: 3px; margin-right: 4px; }

.toolbars { height: 59px; flex: none; background: linear-gradient(90deg, #fff, #fbfbfb 50%, #f2f2f2); border-top: 1px solid #b8b8b8; }
.bar-row { display: flex; height: 28px; }
.bar-row.second { padding-left: 476px; }
.bar { display: flex; align-items: center; border: solid #b0b0b0; border-width: 0 1px 1px 0; background: linear-gradient(#fdfdfd, #f0f0f0); height: 28px; }
.bar button { width: 26px; height: 26px; display: grid; place-items: center; }
.bar.narrow button { width: 25px; }
.bar button svg { width: 22px; height: 22px; }
.bar .on { background: #cce8ff; border: 1px solid #99d1ff; }
.bar.file { width: 154px; margin-right: 306px; }
.bar.file button { margin-left: -3px; margin-right: 3px; }
.grip { width: 3px; height: 15px; flex: none; margin: 0 3px; background: repeating-linear-gradient(#999 0 2px, transparent 2px 4px); }
.grip.blue { background: repeating-linear-gradient(#11f 0 2px, transparent 2px 4px); }
.vsep { width: 1px; height: 16px; background: #aaa; }
.tri { border: 4px solid transparent; border-top-color: #000; border-bottom: 0; margin: 0 4px 0 2px; }
.bar.views { flex: 0 1 573px; }
.combo { display: flex; align-items: stretch; background: #fff; border: 1px solid #a8a8b0; }
.combo select { appearance: none; flex: 1; min-width: 0; padding-left: 3px; }
.drop { width: 12px; flex: none; background: #e1e1e1; border: 1px solid #a8a8a8; display: grid; place-items: center; }
.drop svg { width: 9px; height: 9px; }
.combo.all { width: 105px; height: 24px; }
.combo.render { width: 104px; height: 24px; margin-left: auto; }

.main { flex: 1; min-height: 0; display: flex; }
.side { width: 262px; flex: none; display: flex; flex-direction: column; background: #fdfdfd; margin-right: 5px; }
.side-tabs { display: flex; align-items: flex-end; height: 28px; padding-top: 4px; }
.tab { border: 1px solid #d9d9d9; background: #f0f0f0; white-space: nowrap; }
.tab.active { background: #fff; border-bottom-color: #fff; }
.side-tabs .tab { height: 22px; width: 53px; border-left: 0; }
.side-tabs .tab.active { width: 44px; height: 24px; text-align: left; }
.picker { height: 34px; display: flex; align-items: center; gap: 9px; border: solid #d9d9d9; border-width: 1px 1px 0 0; padding-bottom: 1px; }
.combo.db { width: 167px; height: 23px; margin-left: -2px; align-items: center; }
.combo.db .i16 { margin-left: -1px; }
.combo.db .drop { height: 21px; }
.ud { width: 10px; height: 16px; }
.tree-wrap { flex: 1; min-height: 0; display: grid; grid-template: 1fr 17px / 1fr 16px; border: 1px solid #a8a8b0; border-left: 0; background: #fff; }
.tree { overflow: hidden; min-width: 0; }
.tree > ul { margin-left: -7px; }
.tree li { padding-left: 17px; min-height: 19px; background: repeating-linear-gradient(#999 0 1px, transparent 1px 2px) 8px 0 / 1px 100% no-repeat, repeating-linear-gradient(90deg, #999 0 1px, transparent 1px 2px) 8px 9px / 6px 1px no-repeat; }
.tree li.cut { background-size: 1px 100%, 0 0; }
.tree li:last-child { background-size: 1px 10px, 6px 1px; }
.tree a { display: inline-block; height: 19px; line-height: 18px; padding: 0 2px 0 1px; white-space: nowrap; vertical-align: top; }
.tree .row { display: flex; align-items: center; height: 19px; }
.tree .row .i16, .fx { margin: 0 5px 0 -1px; }
.sel { background: #0078d7; color: #fff; }
.tree .ex { width: 9px; height: 9px; margin: 0 4px 0 -13px; border: 1px solid #999; background: linear-gradient(#3450a0, #3450a0) 1px 3px / 5px 1px no-repeat, linear-gradient(#3450a0, #3450a0) 3px 1px / 1px 5px no-repeat, #fff; }
.tree .ex.minus { background: linear-gradient(#3450a0, #3450a0) 1px 3px / 5px 1px no-repeat, #fff; }
.fx { width: 16px; font: italic bold 11px/16px "Open Sans", sans-serif; display: flex; justify-content: center; }
.vscroll { background: #f0f0f0; display: flex; flex-direction: column; align-items: center; padding: 3px 0; }
.vscroll svg, .hscroll svg { width: 10px; height: 10px; }
.vscroll i { background: #cdcdcd; width: 15px; flex: 0 1 400px; margin: auto 0 87px; }
.vscroll .up { transform: rotate(180deg); }
.hscroll { background: #f0f0f0; display: flex; align-items: center; gap: 2px; }
.hscroll i { background: #cdcdcd; height: 15px; flex: 0 1 210px; }
.lt { transform: rotate(90deg); }
.rt { transform: rotate(-90deg); margin-left: 6px; }
.corner { background: #fff; }

.work { flex: 1; min-width: 0; display: flex; flex-direction: column; }
.context { height: 30px; flex: none; display: flex; align-items: center; padding: 0 0 2px 8px; background: linear-gradient(#fefefe, #ededed); }
.context label { margin-right: 3px; }
.context .combo { margin-right: 13px; height: 25px; border: 2px solid #8c8c8c; border-right-width: 1px; border-bottom-width: 1px; }
.w107 { width: 107px; }
.w138 { width: 138px; }
.w88 { width: 88px; }
.spin { display: flex; flex-direction: column; width: 10px; }
.spin b { flex: 1; display: grid; place-items: center; background: #f0f0f0; border: 1px solid #ccc; }
.spin b::after { content: ""; border: 3px solid transparent; border-top: 0; border-bottom-color: #000; }
.spin b + b::after { border-top: 3px solid #000; border-bottom: 0; }
.canvas-row { flex: 1; min-height: 0; display: flex; }
.toolbox { width: 62px; flex: none; padding: 0 2px; background: linear-gradient(90deg, #fdfdfd, #f0f0f0); }
.tools { display: grid; grid-template-columns: 28px 28px; grid-auto-rows: 28px; justify-content: center; place-items: center; border-bottom: 1px solid #aaa; padding: 3px 0; }
.tools.big { grid-auto-rows: 33px; padding: 0; }
.tools.big svg { margin-top: 2px; }
.tools.rp { grid-template-columns: 56px; justify-items: start; padding-left: 4px; }
.tools:last-child { border: 0; padding-top: 5px; }
.tools svg { width: 22px; height: 22px; }
.tools.rp svg { width: 26px; height: 24px; }
.tiny { font: bold 9px "DejaVu Sans", sans-serif; }
.mini { font: bold 8px "DejaVu Sans", sans-serif; }
.viewport { flex: 1; min-width: 0; border: solid #55585e; border-width: 1px 0 0 1px; background: linear-gradient(#1b2d46, #333f56 50%, #a3b1ca); }
.viewport svg { width: 100%; height: 100%; overflow: hidden; }
.solid { fill: #14559c; opacity: .44; }
.edge { fill: none; stroke: #050a14; stroke-width: 1; }
.ann { stroke: #e4e020; fill: none; }
.lab text { fill: #f0f020; font: 12px "Liberation Sans", sans-serif; }
.labm text { fill: #f8f020; font: 12px "DejaVu Serif", serif; }
.triad text { fill: #fff; font: 12px "DejaVu Sans", sans-serif; }
.g1 { fill: none; stroke: #05e020; stroke-width: 1; shape-rendering: crispEdges; }
.g2 { fill: none; stroke: #08c83c; stroke-width: 1; shape-rendering: crispEdges; }
.haze { fill: #08b850; opacity: .45; }
.rod { stroke: #b8a830; stroke-width: 2; opacity: .8; }
.cone { fill: #c0b430; }
.foot { fill: #d47c30; }
.cart { fill: #c4b040; font: 11px "Liberation Sans", sans-serif; }
.cart.near { fill: #f8c408; }
.prompt { height: 31px; flex: none; background: #fbfbfb; border-top: 1px solid #e4e4e4; }

.dialog { position: absolute; display: flex; flex-direction: column; background: linear-gradient(100deg, #fff, #f0f0f0 60%); box-shadow: 2px 4px 14px rgba(0, 0, 0, .45); }
.dialog header { display: flex; align-items: center; height: 30px; flex: none; padding: 0 10px 0 8px; gap: 5px; background: #fff; }
.dialog h2 { flex: 1; }
.close svg { width: 11px; height: 11px; }
.btn { background: #e1e1e1; border: 1px solid #adadad; height: 21px; width: 58px; line-height: 18px; white-space: nowrap; }
.manager { left: 344px; top: 547px; width: 454px; border: 1px solid #1883d7; }
.list-box { height: 105px; margin: 4px 4px 0; border: 1px solid #a8a8b0; background: #fff; padding: 1px; }
.list-box table { width: 100%; border-collapse: collapse; table-layout: fixed; }
.list-box th, .list-box td { height: 20px; padding: 0 4px; text-align: left; line-height: 18px; }
.list-box th { border-right: 1px solid #e4e4e4; }
.list-box td { background: #0078d7; color: #fff; }
.list-box .focus { outline: 1px dotted #e0a060; outline-offset: -1px; }
.manager footer { display: flex; justify-content: space-between; padding: 8px 11px 5px 10px; }

.editor { left: 840px; top: 37px; bottom: 20px; width: 462px; border: 1px solid #999; }
.editor header { color: #999; }
.facts { padding: 2px 6px 0; height: 103px; flex: none; display: flex; flex-direction: column; }
.facts p { display: flex; align-items: center; height: 24px; gap: 9px; }
.facts .k { width: 34px; }
.facts p.corm { gap: 7px; height: 25px; }
.etabs { display: flex; align-items: flex-end; padding-left: 4px; height: 23px; flex: none; }
.etabs .tab { height: 21px; border-bottom: 0; margin-left: -1px; }
.etabs .tab.active { width: 110px; height: 24px; margin-left: 0; margin-bottom: -1px; padding-bottom: 1px; z-index: 1; }
.t2 { width: 91px; }
.t3 { width: 84px; }
.etabs .tab:disabled { color: #a0a0a0; background: #ececec; }
.epanel { flex: 1; min-height: 0; margin: 0 6px 0 4px; border: 1px solid #d9d9d9; background: #fff; padding: 6px 3px 3px 5px; display: flex; flex-direction: column; gap: 7px; }
fieldset { margin: 0; padding: 0; border: 1px solid #dcdcdc; min-width: 0; }
legend { margin-left: 2px; padding: 0 4px; line-height: 16px; }
.behav { display: flex; flex: none; padding: 5px 0 4px 5px; }
.opts { flex: 1; min-height: 82px; border: 1px solid #a8a8b0; background: #fff; padding: 1px; }
.opts li { height: 19px; line-height: 20px; padding: 0 3px; }
.acts { width: 41px; flex: none; display: flex; flex-direction: column; align-items: center; gap: 17px; padding: 8px 2px 0 0; }
.elas { flex: 1; min-height: 0; display: flex; flex-direction: column; padding: 3px 5px 7px 5px; }
.line { display: flex; align-items: center; height: 23px; flex: none; padding-left: 2px; gap: 7px; white-space: nowrap; }
.line.gap { margin-top: 46px; }
.line.num { height: 27px; padding-right: 3px; gap: 4px; margin-bottom: 4px; }
.line.num > svg { margin-left: auto; }
.line label { display: flex; align-items: center; gap: 4px; }
.off { color: #aaa; }
.line input[type="checkbox"], .line input[type="radio"] { appearance: none; width: 13px; height: 13px; border: 1px solid #222; background: #fff; display: grid; place-items: center; }
.line input[type="radio"] { border-radius: 50%; }
.line input[type="radio"]:checked::after { content: ""; width: 7px; height: 7px; border-radius: 50%; background: #222; }
.line input[type="checkbox"]:checked::after { content: ""; width: 9px; height: 5px; margin-bottom: 3px; border: solid #222; border-width: 0 0 1px 1px; transform: rotate(-45deg); }
.line input[type="checkbox"]:disabled { border-color: #ccc; }
.number { display: flex; width: 58px; height: 23px; border: 1px solid #a8a8b0; background: #fff; padding: 1px; }
.number input { flex: 1; min-width: 0; text-align: right; padding-right: 2px; }
.number .spin { width: 13px; gap: 1px; }
.data { flex: 1; min-height: 0; display: flex; padding: 5px 5px 4px; }
.grid-box { flex: 1; border: 1px solid #a8a8b0; padding: 1px 0; background: #fff; }
.grid-box table { border-collapse: collapse; table-layout: fixed; width: 315px; }
.grid-box th, .grid-box td { height: 20px; padding: 0; text-align: center; line-height: 18px; border: solid #e8e8e8; border-width: 0 1px 1px 0; }
.grid-box th:first-child { width: 15px; }
.editor footer { display: flex; justify-content: space-between; padding: 10px 89px 4px; height: 36px; flex: none; }
.editor footer .btn { width: 54px; }
```
FILE: scene.js
```js
// Draws the connector layer: mesh arcs, connector rods and their labels.
const NS = 'http://www.w3.org/2000/svg';
let seed = 7;
const rnd = () => (seed = (seed * 16807) % 2147483647) / 2147483647;
function add(parent, tag, attrs, text) {
  const n = document.createElementNS(NS, tag);
  for (const k in attrs) n.setAttribute(k, attrs[k]);
  if (text) n.textContent = text;
  document.getElementById(parent).appendChild(n);
}
const r = Math.round;
// Point on the layer: u runs across, v runs from front (0) to back (1).
const pt = (u, v) => [515 + 710 * u + (175 - 60 * u) * v, 442 + 20 * u + 68 * u * u - (62 + 50 * u * u) * v];

let far = '', near = '';
for (const drop of [0, 36]) {
  for (let i = 0; i <= 22; i++) {
    for (let j = 0; j <= 44; j++) {
      const v = i / 22, [x, y] = pt(j / 44, v);
      const w = 8 + r(rnd() * 14), dx = r(rnd() * 14 - 7), dy = r(rnd() * 4 - 2);
      if (rnd() < 0.2) continue;
      const seg = `M${r(x) + dx - w} ${r(y) + dy + drop - 0.5}h${w}v1h${r(w / 2)}`;
      if (v > 0.45) far += seg; else if (drop || rnd() > 0.4) near += seg;
    }
  }
  for (let i = 0; i <= 10; i += 2) {
    for (let j = 0; j <= 8; j++) {
      const [x, y] = pt(j / 9, i / 10);
      near += `M${r(x) - 12} ${r(y) - 8}q-16 7 2 12t48 6t32 -10`;
      near += `M${r(x) - 4} ${r(y) + drop - 1}q26 -8 60 0t30 -4`;
    }
  }
  // Trailing ends of the surface loops along the right edge.
  for (let i = 0; i <= 9; i++) {
    const x = 1370 - i * 7, y = 424 + i * 8 + drop - (drop ? 4 : 0);
    near += `M${x - 66} ${y - 9}q60 0 62 8M${x - 8} ${y - 0.5}h${12 + (i % 3) * 3}M${x - 34} ${y + 3.5}h26M${x - 50} ${y + 6.5}h28`;
  }
}
add('mesh3d', 'path', { d: far, class: 'g2' });
add('mesh3d', 'path', { d: near, class: 'g1' });
add('mesh3d', 'path', { d: 'M630 425L670 408L845 420L845 462L700 455L620 440z', class: 'haze' });

for (let j = 0; j <= 9; j++) {
  const u = j / 9;
  for (let i = 10; i >= 0; i--) {
    const t = i / 10;
    const x = r((547 + 690 * u) * (1 - t) + (690 + 638 * u) * t);
    const y = r((436 + 20 * u + 72 * u * u) * (1 - t) + (382 + 42 * u) * t);
    if (x > 850 && x < 1300) continue;
    add('rods', 'path', { d: `M${x} ${y}v34`, class: 'rod' });
    add('rods', 'path', { d: `M${x} ${y - 4}l5 8h-10z`, class: 'cone' });
    add('rods', 'path', { d: `M${x - 3} ${y + 31}h6v6h-6z`, class: 'foot' });
    if (x < 820 && i !== 0) add('names', 'text', { x: x - 42, y: y + 19, class: 'cart' }, 'Cartesian');
  }
}
add('names', 'text', { x: 516, y: 448, class: 'cart near' }, 'Cartesian');
add('names', 'text', { x: 500, y: 454, class: 'cart near' }, 'Cartesian');
```
